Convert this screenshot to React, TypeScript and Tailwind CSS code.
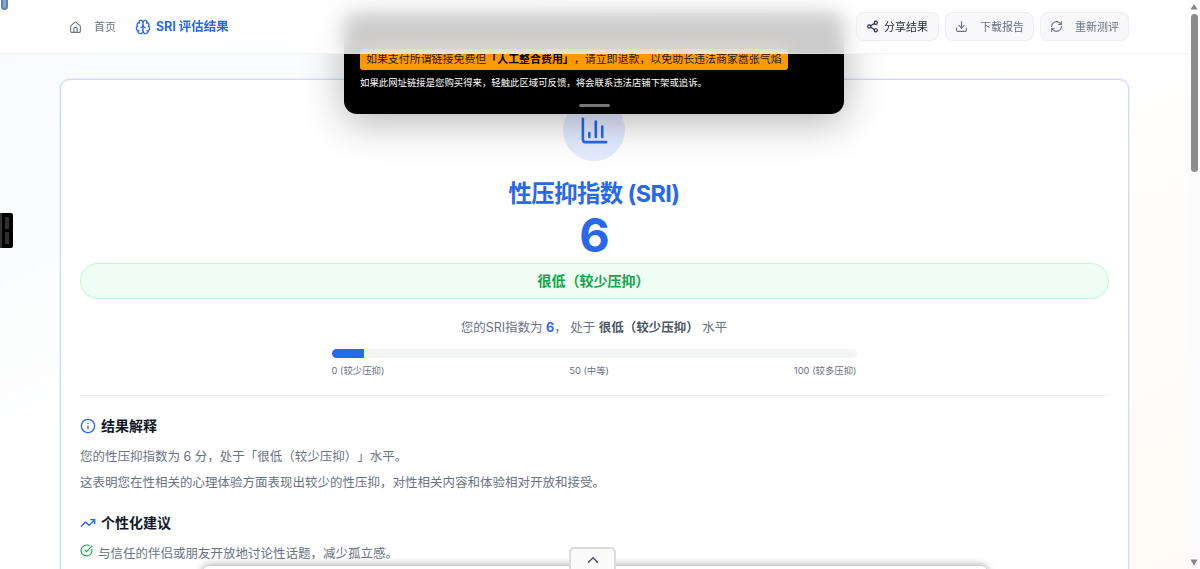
import {
  Brain,
  ChartColumn,
  ChevronUp,
  CircleCheckBig,
  Download,
  House,
  Info,
  RefreshCw,
  Share2,
  TrendingUp,
} from 'lucide-react'

const score = 6

function Header() {
  return (
    <header className="absolute inset-x-0 top-0 z-20 h-[54px] border-b border-gray-200/50 bg-white/80 pr-[13px] backdrop-blur-[9px]">
      <div className="flex h-full items-center justify-between pr-[58px] pl-[69px]">
        <div className="flex items-center pt-px">
          <a className="flex items-center gap-[12px] text-[11px] text-gray-500">
            <House size={13} />
            首页
          </a>
          <h1 className="ml-[19px] flex items-center gap-[5px] text-[12.5px] font-bold whitespace-nowrap text-[#2868ee]">
            <Brain size={16} />
            <span className="pt-px">SRI 评估结果</span>
          </h1>
        </div>
        <div className="flex gap-[6px] text-[11px] text-gray-500">
          <button className="flex h-[29px] w-[83px] items-center gap-[5px] rounded-[8px] border border-gray-200/60 bg-gray-100/60 pl-[9px] text-gray-800">
            <Share2 size={13} />
            <span className="pt-px">分享结果</span>
          </button>
          <button className="flex h-[29px] w-[89px] items-center gap-[12px] rounded-[8px] border border-gray-200/60 bg-gray-100/60 pl-[9px]">
            <Download size={13} />
            <span className="pt-px">下载报告</span>
          </button>
          <button className="flex h-[29px] w-[89px] items-center gap-[12px] rounded-[8px] border border-gray-200/60 bg-gray-100/60 pl-[9px]">
            <RefreshCw size={13} />
            <span className="pt-px">重新测评</span>
          </button>
        </div>
      </div>
    </header>
  )
}

function Notice() {
  return (
    <div className="absolute top-[13px] left-[344px] z-10 flex h-[101px] w-[500px] flex-col items-start rounded-[13px] bg-black px-[16px] pt-[36px] whitespace-nowrap shadow-[0_8px_40px_rgba(0,0,0,0.3)]">
      <p className="h-[21px] rounded-[3px] bg-[#ff9900] px-[6px] text-[10.94px] leading-[21px] text-[#2b1a00]">
        如果支付所谓链接免费但<b className="text-black">「人工整合费用」</b>，请立即退款，以免助长违法商家嚣张气焰
      </p>
      <p className="mt-[5px] text-[9.38px] leading-[15px] text-white">
        如果此网址链接是您购买得来，轻触此区域可反馈，将会联系违法店铺下架或追诉。
      </p>
      <div className="mt-[14px] h-[3px] w-[31px] self-center rounded-full bg-[#777]" />
    </div>
  )
}

function ScoreSummary() {
  return (
    <section className="flex flex-col items-center border-b border-gray-200/80 pb-[18px]">
      <div className="mr-px flex size-[62px] items-center justify-center rounded-full bg-blue-600/12 text-[#2868ee]">
        <ChartColumn size={31} />
      </div>
      <h2 className="mt-[17px] mr-px text-[23.4px] leading-[32px] font-bold tracking-[-0.025em] text-[#2868ee]">
        性压抑指数 (SRI)
      </h2>
      <div className="-mt-px text-[46.9px] leading-[52px] font-bold text-[#2868ee]">{score}</div>
      <div className="mt-[2px] h-[36px] w-full rounded-full border border-green-200/80 bg-green-50 pr-[2px] text-center text-[14px] leading-[34px] font-bold text-[#16a34a]">
        很低（较少压抑）
      </div>
      <p className="mt-[19px] mr-px text-[12.5px] leading-[20px] text-gray-500">
        您的SRI指数为 <b className="text-[#2868ee]">{score}</b>， 处于 <b className="text-gray-600">很低（较少压抑）</b> 水平
      </p>
      <div className="mt-[11px] h-[9px] w-[525px] overflow-hidden rounded-full bg-gray-100">
        <div className="h-full bg-[#2868ee]" style={{ width: `${score}%` }} />
      </div>
      <div className="mt-[6px] mr-px flex w-[525px] justify-between text-[9.38px] leading-[13px] text-gray-500">
        <span>0 (较少压抑)</span>
        <span>50 (中等)</span>
        <span>100 (较多压抑)</span>
      </div>
    </section>
  )
}

function Details() {
  return (
    <section className="text-[12.5px] leading-[26px] text-gray-500">
      <h3 className="mt-[20px] flex h-[20px] items-center gap-[5px] text-[14px] font-bold text-gray-900">
        <Info size={16} className="text-[#2868ee]" />
        结果解释
      </h3>
      <p className="mt-[8px]">您的性压抑指数为 {score} 分，处于「很低（较少压抑）」水平。</p>
      <p>这表明您在性相关的心理体验方面表现出较少的性压抑，对性相关内容和体验相对开放和接受。</p>
      <h3 className="mt-[17px] flex h-[20px] items-center gap-[5px] text-[14px] font-bold text-gray-900">
        <TrendingUp size={16} className="text-[#2868ee]" />
        个性化建议
      </h3>
      <ul className="mt-[10px]">
        <li className="flex items-start gap-[5px] leading-[21px]">
          <CircleCheckBig size={13} className="mt-px shrink-0 text-[#16a34a]" />
          与信任的伴侣或朋友开放地讨论性话题，减少孤立感。
        </li>
      </ul>
    </section>
  )
}

function Scrollbar() {
  return (
    <div className="absolute top-0 right-0 z-30 flex h-full w-[13px] flex-col items-center justify-between bg-[#fcfcfc] py-[3px] pl-px">
      <div className="flex flex-col items-center gap-[4px]">
        <svg width="8" height="7" viewBox="0 0 8 7" className="fill-[#858585]">
          <path d="M4 1 7.5 6.5h-7Z" />
        </svg>
        <div className="h-[158px] w-[7px] rounded-full bg-[#8b8b8b]" />
      </div>
      <svg width="8" height="7" viewBox="0 0 8 7" className="fill-[#858585]">
        <path d="M.5.5h7L4 6.5Z" />
      </svg>
    </div>
  )
}

export default function App() {
  return (
    <div className="relative h-[569px] w-[1200px] overflow-hidden bg-linear-to-br from-slate-50 via-white to-[#fffaf5] font-['Inter','Noto_Sans_CJK_SC',sans-serif] [text-spacing-trim:space-all]">
      <Header />
      <Notice />

      <main className="pt-[79px] pr-[71px] pl-[60px]">
        <div className="h-[600px] rounded-[10px] border border-[#cddafa] bg-white px-[19px] pt-[19px] ring-1 ring-blue-600/8">
          <ScoreSummary />
          <Details />
        </div>
      </main>

      {/* side handle */}
      <div className="absolute top-[213px] left-0 z-10 flex h-[35px] w-[13px] flex-col items-end justify-center gap-[3px] rounded-r-[2px] border-l-2 border-[#333] bg-black pr-[4px]">
        <div className="h-[12px] w-[4px] bg-[#303030]" />
        <div className="h-[12px] w-[4px] bg-[#303030]" />
      </div>
      <div className="absolute top-[-6px] left-[1px] z-30 h-[16px] w-[7px] rounded-full border-2 border-[#6b8098] bg-[#75aef0]" />

      {/* bottom drawer */}
      <div className="absolute top-[566px] left-[203px] z-10 h-[20px] w-[784px] rounded-[6px] bg-white shadow-[0_0_9px_rgba(0,0,0,0.45)]" />
      <div className="absolute top-[547px] left-[569px] z-10 flex h-[23px] w-[47px] items-center justify-center rounded-t-[5px] border-2 border-b-0 border-[#dcdcdc] bg-[#fafafa] text-gray-600">
        <ChevronUp size={18} strokeWidth={2} />
      </div>
      <Scrollbar />
    </div>
  )
}
